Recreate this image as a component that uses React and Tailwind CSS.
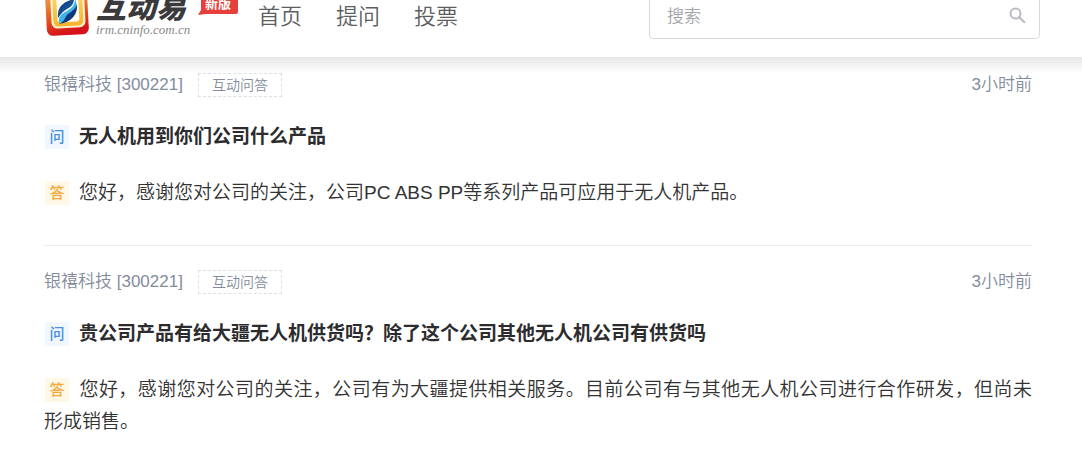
const posts = [
  {
    id: 1,
    company: '银禧科技',
    code: '300221',
    time: '3小时前',
    question: '无人机用到你们公司什么产品',
    answer: '您好，感谢您对公司的关注，公司PC ABS PP等系列产品可应用于无人机产品。',
  },
  {
    id: 2,
    company: '银禧科技',
    code: '300221',
    time: '3小时前',
    question: '贵公司产品有给大疆无人机供货吗？除了这个公司其他无人机公司有供货吗',
    answer:
      '您好，感谢您对公司的关注，公司有为大疆提供相关服务。目前公司有与其他无人机公司进行合作研发，但尚未',
    ending: '形成销售。',
  },
];

const navItems = ['首页', '提问', '投票'];

function LogoMark() {
  return (
    <svg viewBox="0 0 46 46" className="h-[46px] w-[46px] shrink-0" aria-hidden="true">
      <defs>
        <linearGradient id="frame" x1="0" y1="0" x2="0.2" y2="1">
          <stop offset="0.3" stopColor="#e98a3c" />
          <stop offset="0.65" stopColor="#e4521f" />
          <stop offset="1" stopColor="#d4141a" />
        </linearGradient>
        <linearGradient id="inner" x1="0" y1="0" x2="0" y2="1">
          <stop offset="0" stopColor="#fbd774" />
          <stop offset="1" stopColor="#f5b52c" />
        </linearGradient>
        <linearGradient id="wave" x1="0" y1="0" x2="1" y2="1">
          <stop offset="0" stopColor="#0d3474" />
          <stop offset="1" stopColor="#1e6fb6" />
        </linearGradient>
      </defs>
      <g transform="rotate(-3 23 23)">
        <rect x="2" y="-1" width="42" height="46" rx="6" fill="url(#frame)" />
        <rect x="7" y="1" width="34" height="37" rx="6" fill="#fff3d0" />
        <rect x="9" y="3" width="30" height="33" rx="5" fill="url(#inner)" />
        <rect x="13" y="6" width="22" height="26" rx="3" fill="#fffdf6" />
      </g>
      <path d="M14 28C13 18 18 12 30 9c0 5-3 8-7 10-4 2-6 5-9 9z" fill="url(#wave)" />
      <path d="M15 33c-1-6 2-9 8-12 5-3 8-6 8-12 5 11-2 22-16 24z" fill="#3fb4ea" />
      <path d="M15 34c7-3 5-7 9-10 4-3 8-5 9-10 1 10-5 18-18 20z" fill="#0d3a78" />
    </svg>
  );
}

function Logo() {
  return (
    <a href="#" className="flex items-end" aria-label="互动易">
      <LogoMark />
      <span className="ml-1.5 flex w-24 flex-col">
        <span className="text-[30px] leading-8 font-black whitespace-nowrap text-[#3a3a3c] italic">
          互动易
        </span>
        <span className="font-['Liberation_Serif',serif] text-[13px] leading-3 whitespace-nowrap text-[#8a8a8a] italic">
          irm.cninfo.com.cn
        </span>
      </span>
    </a>
  );
}

function NewBadge() {
  return (
    <span className="relative ml-1.5 flex h-5 w-10 justify-center text-[13px] leading-4 font-bold text-white">
      <svg viewBox="0 0 40 20" className="absolute inset-0 h-5 w-10" aria-hidden="true">
        <path d="M3 0h37v16q0 2-2 2H8l-8 1 3-5z" fill="#e5403c" />
      </svg>
      <span className="relative">新版</span>
    </span>
  );
}

function SearchBox() {
  return (
    <form className="relative w-[391px]" onSubmit={(e) => e.preventDefault()}>
      <input
        type="text"
        aria-label="搜索"
        placeholder="搜索"
        className="h-[46px] w-full rounded border border-[#d9dade] bg-white pt-0.5 pr-10 pl-[17px] text-[17px] font-[350] text-gray-700 outline-none placeholder:text-[#a3a5a9]"
      />
      <button type="submit" aria-label="搜索" className="absolute top-[11px] right-3 p-0.5">
        <svg viewBox="0 0 18 18" className="h-[18px] w-[18px]" fill="none" stroke="#b9bbc2">
          <circle cx="7.5" cy="7.5" r="5" strokeWidth="2" />
          <path d="M11.2 11.2l5 4.8" strokeWidth="2.2" strokeLinecap="round" />
        </svg>
      </button>
    </form>
  );
}

function Header() {
  return (
    <header className="relative z-10 overflow-hidden bg-white">
      <div className="-mt-[10px] mr-[42px] ml-11 flex items-start pb-[18px]">
        <Logo />
        <div className="pt-1.5">
          <NewBadge />
        </div>
        <nav className="ml-5 flex gap-[34px] pt-[11px] text-[22px] leading-8 font-[350] text-[#5c5e62]">
          {navItems.map((item) => (
            <a key={item} href="#">
              {item}
            </a>
          ))}
        </nav>
        <div className="ml-auto pt-[3px]">
          <SearchBox />
        </div>
      </div>
    </header>
  );
}

function Mark({ type }) {
  const color =
    type === '问' ? 'bg-[#f0f7ff] text-[#4a90e2]' : 'bg-[#fff8e6] text-[#f5a93b]';
  return (
    <span
      className={`mr-[10px] ml-px inline-block h-6 w-6 text-center align-[1px] text-[15px] leading-6 font-medium ${color}`}
    >
      {type}
    </span>
  );
}

function Post({ post }) {
  return (
    <article className="border-b border-[#ececee] pt-6 pb-9 last:border-b-0">
      <div className="flex items-center text-[17px] leading-6 font-[350] text-[#838c9c]">
        <a href="#">
          {post.company} [{post.code}]
        </a>
        <span className="ml-[15px] h-6 border border-dashed border-[#dcdfe6] px-[13px] text-[14px] leading-[22px]">
          互动问答
        </span>
        <time className="ml-auto">{post.time}</time>
      </div>
      <h2 className="mt-6 text-[19px] leading-8 font-bold text-[#2c2c2e]">
        <Mark type="问" />
        {post.question}
      </h2>
      <p className="mt-6 text-justify text-[19px] leading-8 font-[350] text-[#333]">
        <Mark type="答" />
        {post.answer}
        {post.ending && <span className="whitespace-nowrap">{post.ending}</span>}
      </p>
    </article>
  );
}

export default function App() {
  return (
    <div
      lang="zh-CN"
      className="min-h-screen bg-white font-['Liberation_Sans','Noto_Sans_CJK_SC',sans-serif]"
    >
      <Header />
      <div className="h-4 bg-linear-to-b from-[#e6e6e6] to-white" />
      <main className="-mt-6 mr-[50px] ml-11">
        {posts.map((post) => (
          <Post key={post.id} post={post} />
        ))}
      </main>
    </div>
  );
}
